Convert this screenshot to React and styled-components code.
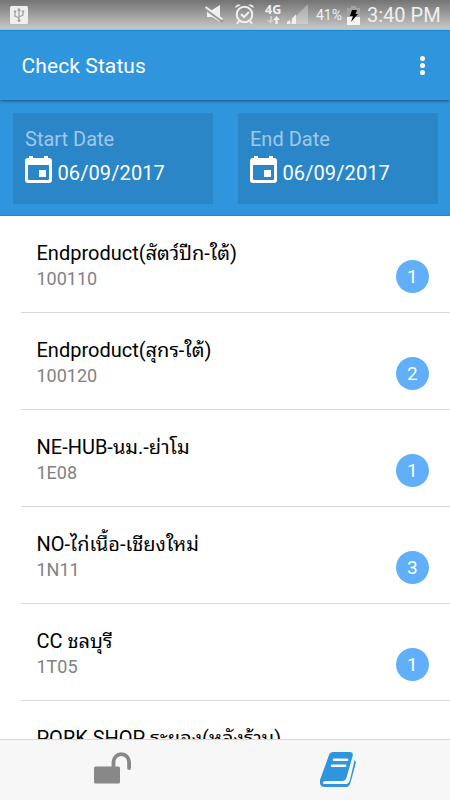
import React from 'react';
import styled, { createGlobalStyle } from 'styled-components';

const GlobalStyle = createGlobalStyle`
  * {
    box-sizing: border-box;
  }
  body {
    margin: 0;
    font-family: Roboto, 'Noto Sans Thai Looped', 'Noto Looped Thai', Loma, Waree, Garuda, 'Noto Sans Thai', 'Noto Sans', sans-serif;
  }
  p,
  h1 {
    margin: 0;
    font-weight: 400;
  }
`;

const Screen = styled.div`
  width: 450px;
  height: 800px;
  display: flex;
  flex-direction: column;
  overflow: hidden;
  background: #fff;
`;

const StatusBarBlock = styled.div`
  flex: none;
  height: 30px;
  padding: 0 9px 0 10px;
  display: flex;
  align-items: center;
  color: #f0f0f0;
  background: linear-gradient(#737373, #cbcbcb);
  svg {
    flex: none;
    display: block;
  }
  .system {
    margin-left: auto;
    display: flex;
    align-items: center;
  }
  .battery {
    width: 28px;
    margin: 0 3px 0 8px;
    font-size: 14px;
    white-space: nowrap;
  }
  .clock {
    width: 74px;
    margin-left: 7px;
    font-size: 20px;
    white-space: nowrap;
  }
`;

const Toolbar = styled.header`
  flex: none;
  height: 70px;
  padding: 0 21px 0 21.5px;
  display: flex;
  align-items: center;
  justify-content: space-between;
  color: #fff;
  background: #2f95dd;
  border-top: 1px solid #128ee0;
  box-shadow: 0 1px 3px rgba(0, 0, 0, 0.45);
  z-index: 1;
  h1 {
    font-size: 21px;
    line-height: 24px;
    letter-spacing: 0.1px;
  }
`;

const MenuDots = styled.div`
  display: flex;
  flex-direction: column;
  gap: 1.7px;
  margin: 0 4px 0 0;
  i {
    width: 5px;
    height: 5px;
    border-radius: 50%;
    background: #fff;
  }
`;

const DateBar = styled.div`
  flex: none;
  height: 116px;
  padding: 12.5px 12.5px 11px;
  display: flex;
  gap: 25px;
  background: #2f95dd;
  border-bottom: 1px solid #128ee0;
`;

const DateBox = styled.div`
  flex: 1;
  padding: 14.5px 12.5px 0;
  background: #2a86c7;
  .label {
    font-size: 20px;
    line-height: 24px;
    color: #9fc8e8;
  }
  .value {
    display: flex;
    align-items: flex-start;
    margin-top: 5px;
    font-size: 20px;
    line-height: 27px;
    color: #fff;
  }
  .value span {
    padding-top: 3.5px;
    letter-spacing: 0.1px;
  }
  svg {
    display: block;
    margin-right: 5.5px;
  }
`;

const List = styled.div`
  flex: 1;
  min-height: 0;
  overflow: hidden;
`;

const ItemBlock = styled.div`
  height: 97px;
  margin-left: 21px;
  padding: 23px 21px 0 15.5px;
  display: flex;
  justify-content: space-between;
  border-bottom: 1px solid #d9d9d9;
  .name {
    height: 29px;
    font-size: 20px;
    line-height: 28px;
    color: #000;
    white-space: nowrap;
  }
  .code {
    font-size: 18px;
    line-height: 22px;
    color: #828282;
  }
`;

const Badge = styled.div`
  width: 33.5px;
  height: 33.5px;
  margin-top: 20.5px;
  border-radius: 50%;
  font-size: 19px;
  line-height: 34px;
  text-align: center;
  color: #fff;
  background: #60aff8;
`;

const TabBar = styled.nav`
  flex: none;
  height: 61px;
  display: flex;
  background: #f7f7f7;
  border-top: 1px solid #d6d6d6;
  z-index: 1;
`;

const Tab = styled.div`
  flex: 1;
  display: flex;
  justify-content: center;
  padding-top: 12px;
  color: ${({ $active }) => ($active ? '#2f95dd' : '#888')};
`;

const CalendarIcon = () => (
  <svg width="27" height="27" viewBox="0 0 27 27">
    <path
      fill="#fff"
      fillRule="evenodd"
      d="M4 0h4v2h11V0h4v2h1a3 3 0 0 1 3 3v19a3 3 0 0 1-3 3H3a3 3 0 0 1-3-3V5a3 3 0 0 1 3-3h1zM3 9v14q0 1 1 1h19q1 0 1-1V9zM14 14h7v7h-7z"
    />
  </svg>
);

const UnlockIcon = () => (
  <svg width="37" height="34" viewBox="0 0 37 34">
    <rect x="0" y="14.500" width="26" height="17" rx="1.5" fill="currentColor" />
    <path d="M19.500 15.500V10a7.800 7.800 0 0 1 15.600 0V16" fill="none" stroke="currentColor" strokeWidth="3.800" strokeLinecap="round" />
  </svg>
);

const BookIcon = () => (
  <svg width="36" height="36" viewBox="0 0 37.500 36" preserveAspectRatio="none">
    <path
      fill="currentColor"
      d="M14 0H31Q35 0 34 4L27.500 26Q26.500 29 23 29H6Q3 29 3 31Q3 32 5 32H27.500Q30 32 31 29L36 8Q38 9 37 12L32 30Q31 35 27 35H5Q-1 35 0 28L9 4Q10 0 14 0Z"
    />
    <path d="M14.500 7.700H28.200M12.500 13.700H26.200" stroke="#f7f7f7" strokeWidth="2.600" strokeLinecap="round" />
  </svg>
);

const UsbIcon = () => (
  <svg width="18" height="18" viewBox="0 0 18 18" fill="none" stroke="#a2a2a2">
    <rect width="18" height="18" rx="1.500" fill="#efefef" stroke="none" />
    <path d="M9 15V3M9 12L5 10V6M9 11L13 9V5" strokeWidth="1.300" />
    <path d="M9 1.500L11 5H7z" fill="#a2a2a2" stroke="none" />
    <circle cx="9" cy="14.500" r="1.500" fill="#a2a2a2" stroke="none" />
    <path d="M3.800 5.500h2.400M11.800 5.500h2.400" strokeWidth="2" />
  </svg>
);

const SystemIcons = () => (
  <svg width="103" height="30" viewBox="205 0 103 30">
    <g fill="#f0f0f0">
      <path d="M207 10h5l8-5v17l-8-5h-5z" />
      <path d="M205 8.500l18 13" stroke="#999" strokeWidth="3" />
      <path d="M205.500 7l17 12.500" stroke="#f0f0f0" strokeWidth="2" />
      <path d="M235 8q1-5 6-3zM248 5q5-2 6 3z" />
      <circle cx="244.500" cy="14.500" r="7.800" fill="none" stroke="#f0f0f0" strokeWidth="2" />
      <path d="M241 14l3 3 5-5M239 21l-2 3M250 21l2 3" fill="none" stroke="#f0f0f0" strokeWidth="2" />
      <text x="265" y="14" fontSize="12.500" fontWeight="700" fontFamily="Noto Sans">4G</text>
      <path d="M276.500 16l3.500 4h-2.300v4h-2.400v-4h-2.300z" />
      <path d="M270 16h2v4h2l-3.500 4-3.500-4h3z" opacity=".45" />
      <path d="M288 24L308 4v20z" opacity=".35" />
      <path d="M287 24v-2l3-2v4zM292 24v-5.500l4-4V24z" />
    </g>
  </svg>
);

const BatteryIcon = () => (
  <svg width="13" height="19" viewBox="0 0 13 19">
    <path d="M4 0h5v2h4v17H0V2h4z" fill="#a4a4a4" />
    <path d="M0 11h13v8H0z" fill="#f5f5f5" />
    <path d="M5 4h5L8.500 8H11L4 16l2-6H3z" fill="#000" />
  </svg>
);

const StatusBar = () => (
  <StatusBarBlock>
    <UsbIcon />
    <div className="system">
      <SystemIcons />
      <span className="battery">41%</span>
      <BatteryIcon />
      <span className="clock">3:40 PM</span>
    </div>
  </StatusBarBlock>
);

const DateField = ({ label, value }) => (
  <DateBox>
    <p className="label">{label}</p>
    <div className="value">
      <CalendarIcon />
      <span>{value}</span>
    </div>
  </DateBox>
);

const Item = ({ name, code, count }) => (
  <ItemBlock>
    <div>
      <p className="name">{name}</p>
      <p className="code">{code}</p>
    </div>
    {count && <Badge>{count}</Badge>}
  </ItemBlock>
);

const items = [
  { name: 'Endproduct(สัตว์ปีก-ใต้)', code: '100110', count: 1 },
  { name: 'Endproduct(สุกร-ใต้)', code: '100120', count: 2 },
  { name: 'NE-HUB-นม.-ย่าโม', code: '1E08', count: 1 },
  { name: 'NO-ไก่เนื้อ-เชียงใหม่', code: '1N11', count: 3 },
  { name: 'CC ชลบุรี', code: '1T05', count: 1 },
  { name: 'PORK SHOP ระยอง(หลังร้าน)' },
];

const App = () => {
  return (
    <>
      <GlobalStyle />
      <Screen>
        <StatusBar />
        <Toolbar>
          <h1>Check Status</h1>
          <MenuDots>
            <i />
            <i />
            <i />
          </MenuDots>
        </Toolbar>
        <DateBar>
          <DateField label="Start Date" value="06/09/2017" />
          <DateField label="End Date" value="06/09/2017" />
        </DateBar>
        <List>
          {items.map(item => (
            <Item key={item.name} {...item} />
          ))}
        </List>
        <TabBar>
          <Tab>
            <UnlockIcon />
          </Tab>
          <Tab $active>
            <BookIcon />
          </Tab>
        </TabBar>
      </Screen>
    </>
  );
};

export default App;
